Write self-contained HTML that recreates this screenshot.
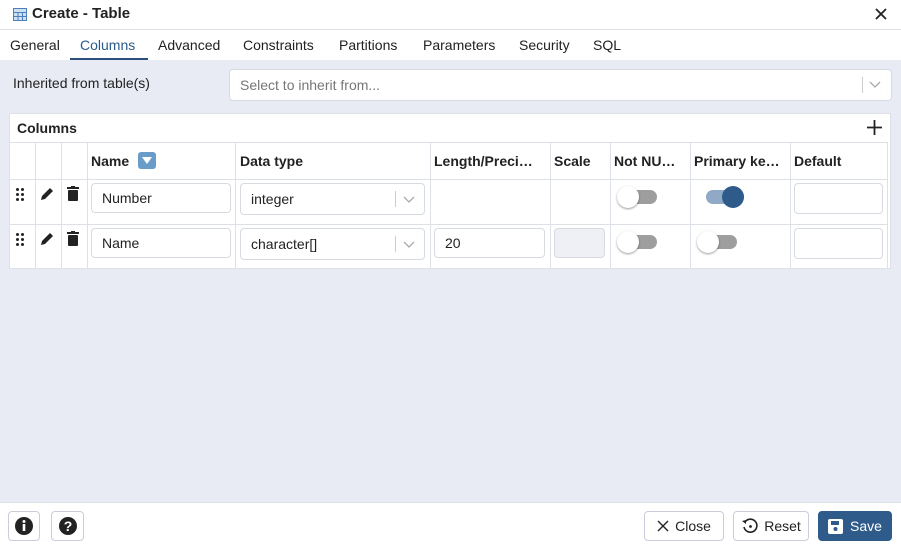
<!DOCTYPE html><html><head><style>
*{box-sizing:border-box;margin:0;padding:0}
body{width:901px;height:549px;position:relative;font-family:"Liberation Sans",sans-serif;font-size:14px;color:#222;background:#fff;overflow:hidden}
.a{position:absolute}
.b{font-weight:bold}
.inp{position:absolute;background:#fff;border:1px solid #d7dae0;border-radius:4px;font-size:14px;padding-left:10px;display:flex;align-items:center}
.vl{position:absolute;top:142px;height:126px;width:1px;background:#dde0e6}
.hl{position:absolute;left:9px;width:878px;height:1px;background:#dde0e6}
.tg{position:absolute;width:38px;height:14px;border-radius:7px;background:#9e9e9e}
.tg i{position:absolute;left:-2px;top:-4px;width:22px;height:22px;border-radius:50%;background:#fff;box-shadow:0 1px 2px rgba(0,0,0,.4)}
.btn{position:absolute;top:511px;height:30px;border:1px solid #ccd;border-radius:4px;background:#fff;display:flex;align-items:center;justify-content:center;font-size:14px}
</style></head><body>
<svg class="a" style="left:13px;top:8px" width="14" height="13"><rect x=".5" y=".5" width="13" height="12" fill="#cfe0f4" stroke="#4d7fb8"/><path d="M0 4.5H14M0 8.5H14M5 4V13M9.5 4V13" stroke="#4d7fb8"/></svg>
<div class="a b" style="left:32px;top:5px;font-size:15px">Create - Table</div>
<svg class="a" style="left:875px;top:8px" width="12" height="12"><path d="M1 1L11 11M11 1L1 11" stroke="#222" stroke-width="1.8"/></svg>
<div class="a" style="left:0;top:29px;width:901px;height:1px;background:#dde0e6"></div>
<div class="a" style="top:37px;left:10px">General</div>
<div class="a" style="top:37px;left:80px;color:#2b5a8a">Columns</div>
<div class="a" style="top:58px;left:70px;width:78px;height:2px;background:#2b4f7a"></div>
<div class="a" style="top:37px;left:158px">Advanced</div>
<div class="a" style="top:37px;left:243px">Constraints</div>
<div class="a" style="top:37px;left:339px">Partitions</div>
<div class="a" style="top:37px;left:423px">Parameters</div>
<div class="a" style="top:37px;left:519px">Security</div>
<div class="a" style="top:37px;left:593px">SQL</div>
<div class="a" style="left:0;top:60px;width:901px;height:442px;background:#e8ebf3"></div>
<div class="a" style="left:13px;top:75px">Inherited from table(s)</div>
<div class="inp" style="left:229px;top:69px;width:663px;height:32px;color:#777">Select to inherit from...</div>
<div class="a" style="left:862px;top:77px;width:1px;height:16px;background:#ccc"></div>
<svg class="a" style="left:869px;top:81px" width="12" height="8"><path d="M1 1L6 6L11 1" stroke="#aaa" fill="none" stroke-width="1.3"/></svg>
<div class="a" style="left:9px;top:113px;width:882px;height:156px;background:#fff;border:1px solid #dde0e6"></div>
<div class="a b" style="left:17px;top:120px">Columns</div>
<svg class="a" style="left:867px;top:120px" width="15" height="15"><path d="M7.5 0V15M0 7.5H15" stroke="#222" stroke-width="1.8"/></svg>
<div class="hl" style="top:142px"></div><div class="hl" style="top:179px"></div><div class="hl" style="top:224px"></div><div class="hl" style="top:268px"></div>
<div class="vl" style="left:35px"></div><div class="vl" style="left:61px"></div><div class="vl" style="left:87px"></div><div class="vl" style="left:235px"></div><div class="vl" style="left:430px"></div><div class="vl" style="left:550px"></div><div class="vl" style="left:610px"></div><div class="vl" style="left:690px"></div><div class="vl" style="left:790px"></div><div class="vl" style="left:887px"></div>
<div class="a b" style="left:91px;top:153px">Name</div>
<div class="a" style="left:138px;top:152px;width:18px;height:17px;background:#6a9cc9;border-radius:3px"></div>
<svg class="a" style="left:141px;top:156px" width="12" height="9"><path d="M1 1H11L6 8Z" fill="#fff"/></svg>
<div class="a b" style="left:240px;top:153px">Data type</div>
<div class="a b" style="left:434px;top:153px">Length/Preci…</div>
<div class="a b" style="left:554px;top:153px">Scale</div>
<div class="a b" style="left:614px;top:153px">Not NU…</div>
<div class="a b" style="left:694px;top:153px">Primary ke…</div>
<div class="a b" style="left:794px;top:153px">Default</div>
<svg class="a" style="left:16px;top:188px" width="9" height="13"><g fill="#222"><circle cx="1.5" cy="1.5" r="1.5"/><circle cx="6.5" cy="1.5" r="1.5"/><circle cx="1.5" cy="6.5" r="1.5"/><circle cx="6.5" cy="6.5" r="1.5"/><circle cx="1.5" cy="11.5" r="1.5"/><circle cx="6.5" cy="11.5" r="1.5"/></g></svg>
<svg class="a" style="left:16px;top:233px" width="9" height="13"><g fill="#222"><circle cx="1.5" cy="1.5" r="1.5"/><circle cx="6.5" cy="1.5" r="1.5"/><circle cx="1.5" cy="6.5" r="1.5"/><circle cx="6.5" cy="6.5" r="1.5"/><circle cx="1.5" cy="11.5" r="1.5"/><circle cx="6.5" cy="11.5" r="1.5"/></g></svg>
<svg class="a" style="left:39px;top:186px" width="16" height="16"><path d="M2 14L3 10L11 2L14 5L6 13Z" fill="#222"/></svg>
<svg class="a" style="left:39px;top:231px" width="16" height="16"><path d="M2 14L3 10L11 2L14 5L6 13Z" fill="#222"/></svg>
<svg class="a" style="left:67px;top:186px" width="12" height="15"><rect x="0" y="1" width="12" height="2" fill="#222"/><rect x="4" y="0" width="4" height="2" fill="#222"/><rect x="1" y="4" width="10" height="11" rx="1" fill="#222"/></svg>
<svg class="a" style="left:67px;top:231px" width="12" height="15"><rect x="0" y="1" width="12" height="2" fill="#222"/><rect x="4" y="0" width="4" height="2" fill="#222"/><rect x="1" y="4" width="10" height="11" rx="1" fill="#222"/></svg>
<div class="inp" style="left:91px;top:183px;width:140px;height:30px">Number</div>
<div class="inp" style="left:91px;top:228px;width:140px;height:30px">Name</div>
<div class="inp" style="left:240px;top:183px;width:185px;height:32px">integer</div>
<div class="inp" style="left:240px;top:228px;width:185px;height:32px">character[]</div>
<div class="a" style="left:395px;top:191px;width:1px;height:16px;background:#ccc"></div>
<div class="a" style="left:395px;top:236px;width:1px;height:16px;background:#ccc"></div>
<svg class="a" style="left:403px;top:196px" width="12" height="8"><path d="M1 1L6 6L11 1" stroke="#aaa" fill="none" stroke-width="1.3"/></svg>
<svg class="a" style="left:403px;top:241px" width="12" height="8"><path d="M1 1L6 6L11 1" stroke="#aaa" fill="none" stroke-width="1.3"/></svg>
<div class="inp" style="left:434px;top:228px;width:111px;height:30px">20</div>
<div class="inp" style="left:554px;top:228px;width:51px;height:30px;background:#eef0f5"></div>
<div class="tg" style="left:619px;top:190px"><i></i></div>
<div class="tg" style="left:619px;top:235px"><i></i></div>
<div class="tg" style="left:706px;top:190px;background:#8fa9c6"><i style="left:16px;background:#2f5b8a;box-shadow:none"></i></div>
<div class="tg" style="left:699px;top:235px"><i></i></div>
<div class="inp" style="left:794px;top:183px;width:89px;height:31px"></div>
<div class="inp" style="left:794px;top:228px;width:89px;height:31px"></div>
<div class="a" style="left:0;top:502px;width:901px;height:1px;background:#dde0e6"></div>
<div class="btn" style="left:8px;width:32px"><svg width="20" height="20"><circle cx="10" cy="10" r="9" fill="#222"/><rect x="8.7" y="8" width="2.6" height="7" fill="#fff"/><circle cx="10" cy="5.5" r="1.5" fill="#fff"/></svg></div>
<div class="btn" style="left:51px;width:33px"><svg width="20" height="20"><circle cx="10" cy="10" r="9" fill="#222"/><text x="10" y="15" text-anchor="middle" fill="#fff" font-size="14" font-weight="bold" font-family="Liberation Sans">?</text></svg></div>
<div class="btn" style="left:644px;width:80px"><svg width="12" height="12" style="margin-right:6px"><path d="M1 1L11 11M11 1L1 11" stroke="#222" stroke-width="1.4"/></svg>Close</div>
<div class="btn" style="left:733px;width:76px"><svg width="18" height="18" style="margin-right:5px"><path d="M4 5A6.5 6.5 0 1 1 3 10" stroke="#222" fill="none" stroke-width="1.6"/><path d="M1 4L5 3L5 7Z" fill="#222"/><circle cx="9.5" cy="9.5" r="1.4" fill="#222"/></svg>Reset</div>
<div class="btn" style="left:818px;width:74px;background:#2f5b8a;border-color:#2f5b8a;color:#fff"><svg width="15" height="15" style="margin-right:7px"><rect width="15" height="15" rx="2" fill="#fff"/><rect x="3" y="2" width="8" height="4" fill="#2f5b8a"/><circle cx="7.5" cy="10" r="2" fill="#2f5b8a"/></svg>Save</div>
</body></html>
